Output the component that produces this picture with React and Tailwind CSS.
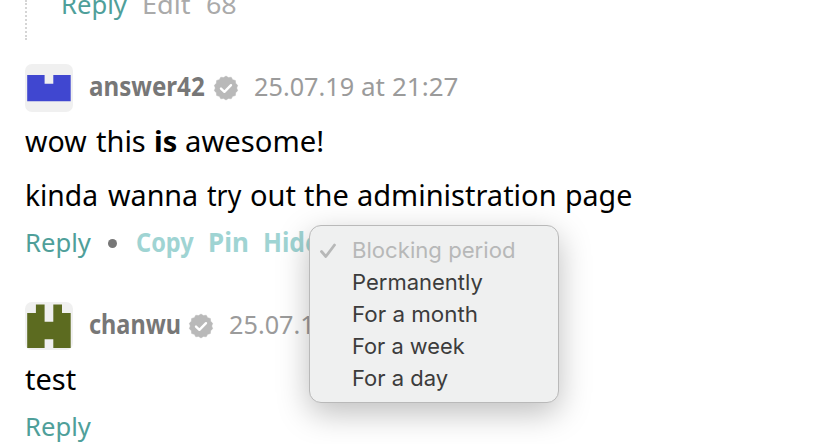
import { useLayoutEffect, useRef, useState } from "react";

// Text run condensed horizontally to the width of its box.
function Fit({ className = "", children }) {
  const box = useRef(null);
  const ink = useRef(null);
  const [scale, setScale] = useState(1);
  useLayoutEffect(() => {
    setScale(box.current.clientWidth / ink.current.offsetWidth);
  }, []);
  return (
    <span ref={box} className={`block shrink-0 whitespace-nowrap ${className}`}>
      <span ref={ink} className="inline-block origin-left" style={{ transform: `scaleX(${scale})` }}>
        {children}
      </span>
    </span>
  );
}

const points = Array.from({ length: 28 }, (_, i) => {
  const r = i % 2 ? 10.7 : 12;
  const a = (i * Math.PI) / 14 - Math.PI / 2;
  return `${(12 + r * Math.cos(a)).toFixed(2)},${(12 + r * Math.sin(a)).toFixed(2)}`;
}).join(" ");

function Badge({ className }) {
  return (
    <svg viewBox="0 0 24 24" className={`size-6 shrink-0 overflow-visible ${className}`}>
      <polygon points={points} fill="#b9b9b9" stroke="#b9b9b9" strokeWidth=".5" strokeLinejoin="round" />
      <path d="M7 12.6l3.4 3.2 6.6-6.6" fill="none" stroke="#fff" strokeWidth="2.4" strokeLinecap="round" strokeLinejoin="round" />
    </svg>
  );
}

function Avatar({ color, d }) {
  return (
    <svg viewBox="0 0 48 48" className="size-12 shrink-0 rounded-[7px] bg-[#f0f0f0]">
      <path d={d} fill={color} transform="translate(2.2 2.4) scale(8.7)" />
    </svg>
  );
}

const items = [
  ["Permanently", "w-[131px]"],
  ["For a month", "w-[126px]"],
  ["For a week", "w-[113px]"],
  ["For a day", "w-[96px]"],
];

export default function App() {
  return (
    <div className="relative h-[444px] w-[824px] overflow-hidden bg-white font-['Noto_Sans',sans-serif] text-[26px] leading-[42px] text-[#9b9b9b]">
      <div className="ml-[25px] flex h-10 items-start border-l-2 border-dotted border-[#d5d5d5]">
        <div className="-mt-[17px] flex pl-[34px]">
          <Fit className="w-[66px] text-[#4f9f9a]">Reply</Fit>
          <Fit className="ml-[15px] w-[49px] text-[#aaaaaa]">Edit</Fit>
          <Fit className="ml-[15px] w-[31px] text-[#aaaaaa]">68</Fit>
        </div>
      </div>

      <article className="mt-[24px] pl-[25px]">
        <header className="flex h-12 items-center">
          <Avatar color="#4047d0" d="M0 1h2v1h1v-1h2v3h-5z" />
          <div className="flex items-center pb-1">
            <Fit className="ml-[16px] w-[116px] font-bold text-[#777777]">answer42</Fit>
            <Badge className="ml-[9px] mt-1" />
            <Fit className="ml-[16px] w-[100px]">25.07.19</Fit>
            <Fit className="ml-[7px] w-[24px]">at</Fit>
            <Fit className="ml-[7px] w-[66px]">21:27</Fit>
          </div>
        </header>
        <p className="mt-[2px] flex text-[29px] leading-[54px] text-black">
          <Fit className="w-[62px]">wow</Fit>
          <Fit className="ml-[9px] w-[50px]">this</Fit>
          <Fit className="ml-[8px] w-[23px] font-bold">is</Fit>
          <Fit className="ml-[8px] w-[139px]">awesome!</Fit>
        </p>
        <p className="flex text-[29px] leading-[54px] text-black">
          <Fit className="w-[73px]">kinda</Fit>
          <Fit className="ml-[10px] w-[90px]">wanna</Fit>
          <Fit className="ml-[9px] w-[34px]">try</Fit>
          <Fit className="ml-[9px] w-[46px]">out</Fit>
          <Fit className="ml-[8px] w-[45px]">the</Fit>
          <Fit className="ml-[8px] w-[200px]">administration</Fit>
          <Fit className="ml-[8px] w-[67px]">page</Fit>
        </p>
        <div className="-mt-px flex items-center font-bold text-[#9fd4d3]">
          <Fit className="w-[66px] font-normal text-[#4f9f9a]">Reply</Fit>
          <span className="ml-[17px] mt-[3px] size-[9px] rounded-full bg-[#777777]" />
          <Fit className="ml-[19px] w-[58px]">Copy</Fit>
          <Fit className="ml-[14px] w-[41px]">Pin</Fit>
          <Fit className="ml-[14px] w-[57px]">Hide</Fit>
        </div>
      </article>

      <article className="mt-[39px] pl-[25px]">
        <header className="flex h-12 items-center">
          <Avatar color="#5c6b20" d="M1 0h1v2h1v-2h1v1h1v4h-2v-1h-1v1h-2v-4h1z" />
          <div className="flex items-center pb-1">
            <Fit className="ml-[16px] w-[92px] font-bold text-[#777777]">chanwu</Fit>
            <Badge className="ml-[8px] mt-1" />
            <Fit className="ml-[16px] w-[100px]">25.07.19</Fit>
          </div>
        </header>
        <p className="mt-[2px] flex text-[29px] leading-[54px] text-black">
          <Fit className="w-[51px]">test</Fit>
        </p>
        <div className="-mt-px flex">
          <Fit className="w-[66px] text-[#4f9f9a]">Reply</Fit>
        </div>
      </article>

      <div className="absolute left-[309px] top-[225px] h-[178px] w-[250px] rounded-[12px] border border-[#b9b9b9] bg-[#eff0f0] pt-[8px] font-['Inter',sans-serif] text-[22px] leading-[32px] text-[#3c3c3c] shadow-[0_10px_32px_rgba(0,0,0,0.26)]">
        <div className="flex items-center text-[#b7b8b8]">
          <svg viewBox="0 0 18 18" className="ml-[9px] mt-px size-[18px] shrink-0">
            <path d="M2.5 9.5l4.3 5L15.5 3" fill="none" stroke="currentColor" strokeWidth="2.8" strokeLinecap="round" strokeLinejoin="round" />
          </svg>
          <Fit className="ml-[15px] w-[163px]">Blocking period</Fit>
        </div>
        {items.map(([label, width]) => (
          <div key={label} className="pl-[42px]">
            <Fit className={width}>{label}</Fit>
          </div>
        ))}
      </div>
    </div>
  );
}
